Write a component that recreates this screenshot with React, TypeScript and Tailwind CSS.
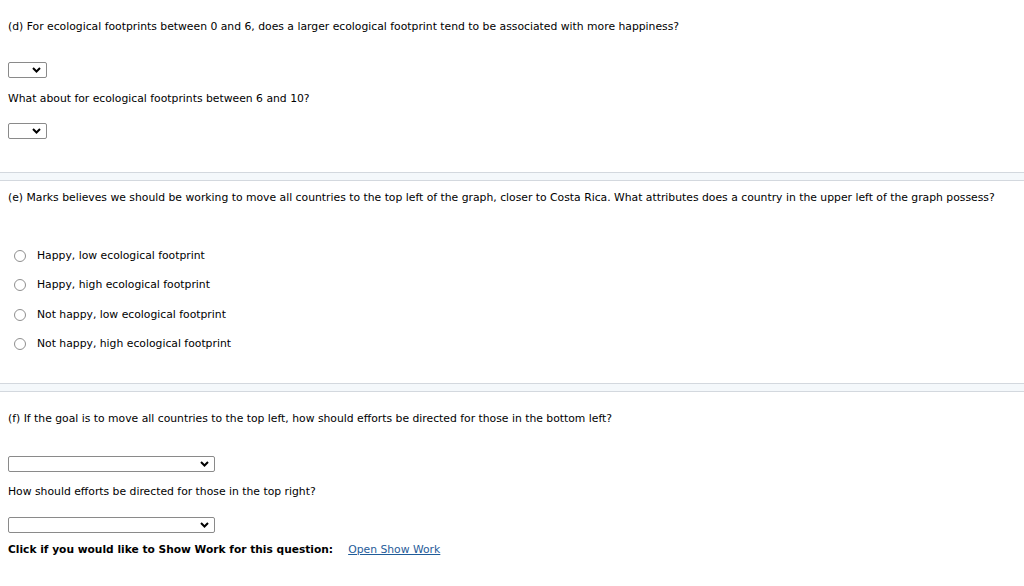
import React from "react";

const Chevron = () => (
  <svg width="9" height="6" viewBox="0 0 9 6" className="block">
    <path d="M1 1 L4.5 4.5 L8 1" fill="none" stroke="#000" strokeWidth="2" />
  </svg>
);

const Select = ({ wide }: { wide?: boolean }) => (
  <div
    className={`${wide ? "w-[207px]" : "w-[39px]"} h-[16px] border border-[#8a8a8a] rounded-[2px] bg-white flex items-center justify-end pr-[5px]`}
  >
    <Chevron />
  </div>
);

const Separator = () => (
  <div className="h-[9px] w-full border-t border-b border-[#d3d8de] bg-[#f4f8fb]" />
);

const Radio = ({ label }: { label: string }) => (
  <div className="h-[29.5px] flex items-center">
    <div className="ml-[14px] w-[12px] h-[12px] rounded-full border border-[#8f8f8f] bg-white" />
    <span className="ml-[11px] leading-[14px]">{label}</span>
  </div>
);

export default function App() {
  return (
    <div
      className="w-[1024px] h-[586px] bg-white text-[10.8px] text-black overflow-hidden"
      style={{ fontFamily: '"DejaVu Sans", Verdana, sans-serif' }}
    >
      <div className="px-2 pt-[20px]">
        <p className="leading-[14px]">
          (d) For ecological footprints between 0 and 6, does a larger ecological footprint tend to be associated with more happiness?
        </p>
        <div className="mt-[28px]">
          <Select />
        </div>
        <p className="mt-[14px] leading-[14px]">What about for ecological footprints between 6 and 10?</p>
        <div className="mt-[17px]">
          <Select />
        </div>
      </div>
      <div className="mt-[33px]">
        <Separator />
      </div>
      <div className="px-2 mt-[10px]">
        <p className="leading-[14px]">
          (e) Marks believes we should be working to move all countries to the top left of the graph, closer to Costa Rica. What attributes does a country in the upper left of the graph possess?
        </p>
      </div>
      <div className="mt-[36px]">
        <Radio label="Happy, low ecological footprint" />
        <Radio label="Happy, high ecological footprint" />
        <Radio label="Not happy, low ecological footprint" />
        <Radio label="Not happy, high ecological footprint" />
      </div>
      <div className="mt-[23.5px]">
        <Separator />
      </div>
      <div className="px-2 mt-[20px]">
        <p className="leading-[14px]">
          (f) If the goal is to move all countries to the top left, how should efforts be directed for those in the bottom left?
        </p>
        <div className="mt-[30px]">
          <Select wide />
        </div>
        <p className="mt-[13px] leading-[14px]">How should efforts be directed for those in the top right?</p>
        <div className="mt-[18px]">
          <Select wide />
        </div>
        <p className="mt-[10px] leading-[14px]">
          <span className="font-bold text-[10.65px]">Click if you would like to Show Work for this question:</span>
          <a className="ml-[15px] text-[#1f5c99] underline" href="#">
            Open Show Work
          </a>
        </p>
      </div>
    </div>
  );
}
